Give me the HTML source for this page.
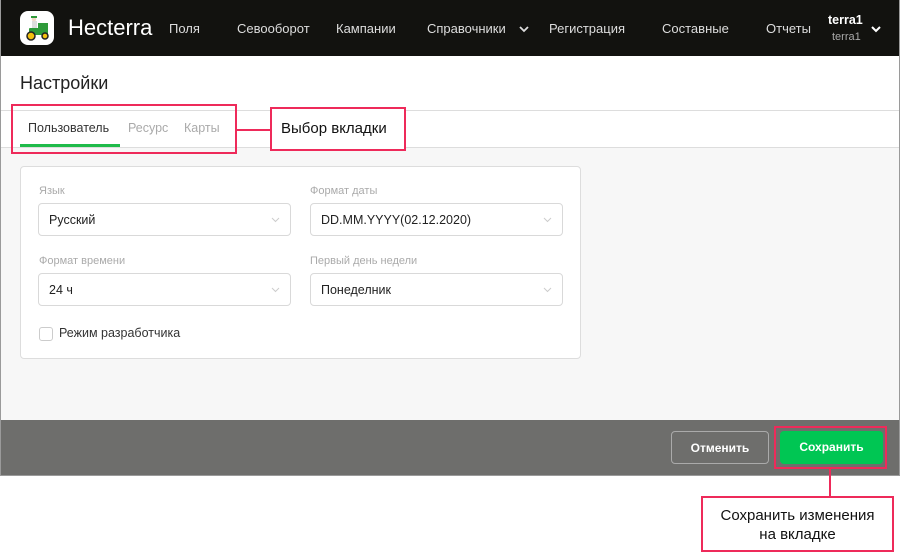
<!DOCTYPE html>
<html><head><meta charset="utf-8">
<style>
*{box-sizing:border-box;margin:0;padding:0}
body{width:900px;height:556px;background:#fff;font-family:"Liberation Sans",sans-serif;position:relative;overflow:hidden}
.frame{position:absolute;left:0;top:0;width:900px;height:476px;border:1px solid #9a9a9a;border-top:none;overflow:hidden}
.hdr{position:absolute;left:0;top:0;width:900px;height:56px;background:#12120f;color:#e6e6e6}
.logo{position:absolute;left:19px;top:11px;width:34px;height:34px;background:#fff;border-radius:8px}
.brand{position:absolute;left:67px;top:15px;font-size:22px;color:#fff}
.nav{position:absolute;top:21px;font-size:13px;color:#ddd}
.user{position:absolute;left:827px;top:13px;font-size:12.5px;color:#fff;font-weight:bold}
.user2{position:absolute;left:831px;top:31px;font-size:11px;color:#aaa}
.title{position:absolute;left:19px;top:73px;font-size:18px;color:#222}
.line1{position:absolute;left:0;top:110px;width:900px;height:1px;background:#ddd}
.tab{position:absolute;top:121px;font-size:12.5px;color:#aaa}
.line2{position:absolute;left:0;top:147px;width:900px;height:1px;background:#ddd}
.gray{position:absolute;left:0;top:148px;width:900px;height:272px;background:#f7f7f7}
.card{position:absolute;left:19px;top:166px;width:561px;height:193px;background:#fff;border:1px solid #ddd;border-radius:4px}
.lbl{position:absolute;font-size:11px;color:#aaa}
.sel{position:absolute;width:253px;height:33px;border:1px solid #d9d9d9;border-radius:4px;font-size:12.5px;color:#222;padding:9px 0 0 10px}
.sel svg{position:absolute;right:10px;top:13px}
.foot{position:absolute;left:0;top:420px;width:900px;height:55px;background:#6e6e6c}
.btn{position:absolute;top:431px;height:33px;border-radius:4px;font-size:12px;font-weight:bold;color:#fff;text-align:center;line-height:33px}
.ann{position:absolute;border:2px solid #ee2a5a}
</style></head><body>
<div class="frame">
<div class="hdr">
 <div class="logo"><svg width="34" height="34" viewBox="0 0 34 34">
 <rect x="9" y="17" width="19" height="7" rx="1" fill="#2e9a3a"/><rect x="18" y="12" width="10" height="6" fill="#2e9a3a"/>
 <rect x="12" y="10" width="5" height="7" fill="#ddd"/>
 <circle cx="14" cy="8" r="2.3" fill="#f1d7c8"/><rect x="11" y="5" width="6" height="2" fill="#2e9a3a"/>
 <circle cx="11" cy="25" r="4" fill="#f2c10f" stroke="#222" stroke-width="1.5"/><circle cx="25" cy="25" r="3" fill="#f2c10f" stroke="#222" stroke-width="1.5"/></svg></div>
 <div class="brand">Hecterra</div>
 <div class="nav" style="left:168px">Поля</div>
 <div class="nav" style="left:236px">Севооборот</div>
 <div class="nav" style="left:335px">Кампании</div>
 <div class="nav" style="left:426px">Справочники</div>
 <svg style="position:absolute;left:518px;top:26px" width="10" height="7"><path d="M1 1l4 4 4-4" stroke="#ddd" stroke-width="1.8" fill="none"/></svg>
 <div class="nav" style="left:548px">Регистрация</div>
 <div class="nav" style="left:661px">Составные</div>
 <div class="nav" style="left:765px">Отчеты</div>
 <div class="user">terra1</div><div class="user2">terra1</div>
 <svg style="position:absolute;left:870px;top:26px" width="10" height="7"><path d="M1 1l4 4 4-4" stroke="#fff" stroke-width="2" fill="none"/></svg>
</div>
<div class="title">Настройки</div>
<div class="line1"></div>
<div class="tab" style="left:27px;color:#333">Пользователь</div>
<div class="tab" style="left:127px">Ресурс</div>
<div class="tab" style="left:183px">Карты</div>
<div style="position:absolute;left:19px;top:144px;width:100px;height:4px;background:#1fbb4a"></div>
<div class="line2"></div>
<div class="gray"></div>
<div class="card"></div>
<div class="lbl" style="left:38px;top:185px">Язык</div>
<div class="lbl" style="left:309px;top:185px">Формат даты</div>
<div class="sel" style="left:37px;top:203px">Русский<svg width="9" height="6"><path d="M1 1l3.5 3.5 3.5-3.5" stroke="#ccc" fill="none"/></svg></div>
<div class="sel" style="left:309px;top:203px">DD.MM.YYYY(02.12.2020)<svg width="9" height="6"><path d="M1 1l3.5 3.5 3.5-3.5" stroke="#ccc" fill="none"/></svg></div>
<div class="lbl" style="left:38px;top:255px">Формат времени</div>
<div class="lbl" style="left:309px;top:255px">Первый день недели</div>
<div class="sel" style="left:37px;top:273px">24 ч<svg width="9" height="6"><path d="M1 1l3.5 3.5 3.5-3.5" stroke="#ccc" fill="none"/></svg></div>
<div class="sel" style="left:309px;top:273px">Понеделник<svg width="9" height="6"><path d="M1 1l3.5 3.5 3.5-3.5" stroke="#ccc" fill="none"/></svg></div>
<div style="position:absolute;left:38px;top:327px;width:14px;height:14px;border:1px solid #ccc;border-radius:3px;background:#fff"></div>
<div style="position:absolute;left:58px;top:326px;font-size:12.5px;color:#333">Режим разработчика</div>
<div class="foot"></div>
<div class="btn" style="left:670px;width:98px;border:1px solid #aaa">Отменить</div>
<div class="btn" style="left:779px;width:103px;background:#00c653">Сохранить</div>
</div>
<div class="ann" style="left:11px;top:104px;width:226px;height:50px"></div>
<div style="position:absolute;left:237px;top:129px;width:34px;height:2px;background:#ee2a5a"></div>
<div class="ann" style="left:270px;top:107px;width:136px;height:44px;background:#fff"></div>
<div style="position:absolute;left:281px;top:120px;font-size:15px;color:#111">Выбор вкладки</div>
<div class="ann" style="left:774px;top:426px;width:113px;height:43px"></div>
<div style="position:absolute;left:829px;top:469px;width:2px;height:28px;background:#ee2a5a"></div>
<div class="ann" style="left:701px;top:496px;width:193px;height:56px"></div>
<div style="position:absolute;left:701px;top:506px;width:193px;text-align:center;font-size:15px;color:#111;line-height:19px">Сохранить изменения<br>на вкладке</div>
</body></html>
